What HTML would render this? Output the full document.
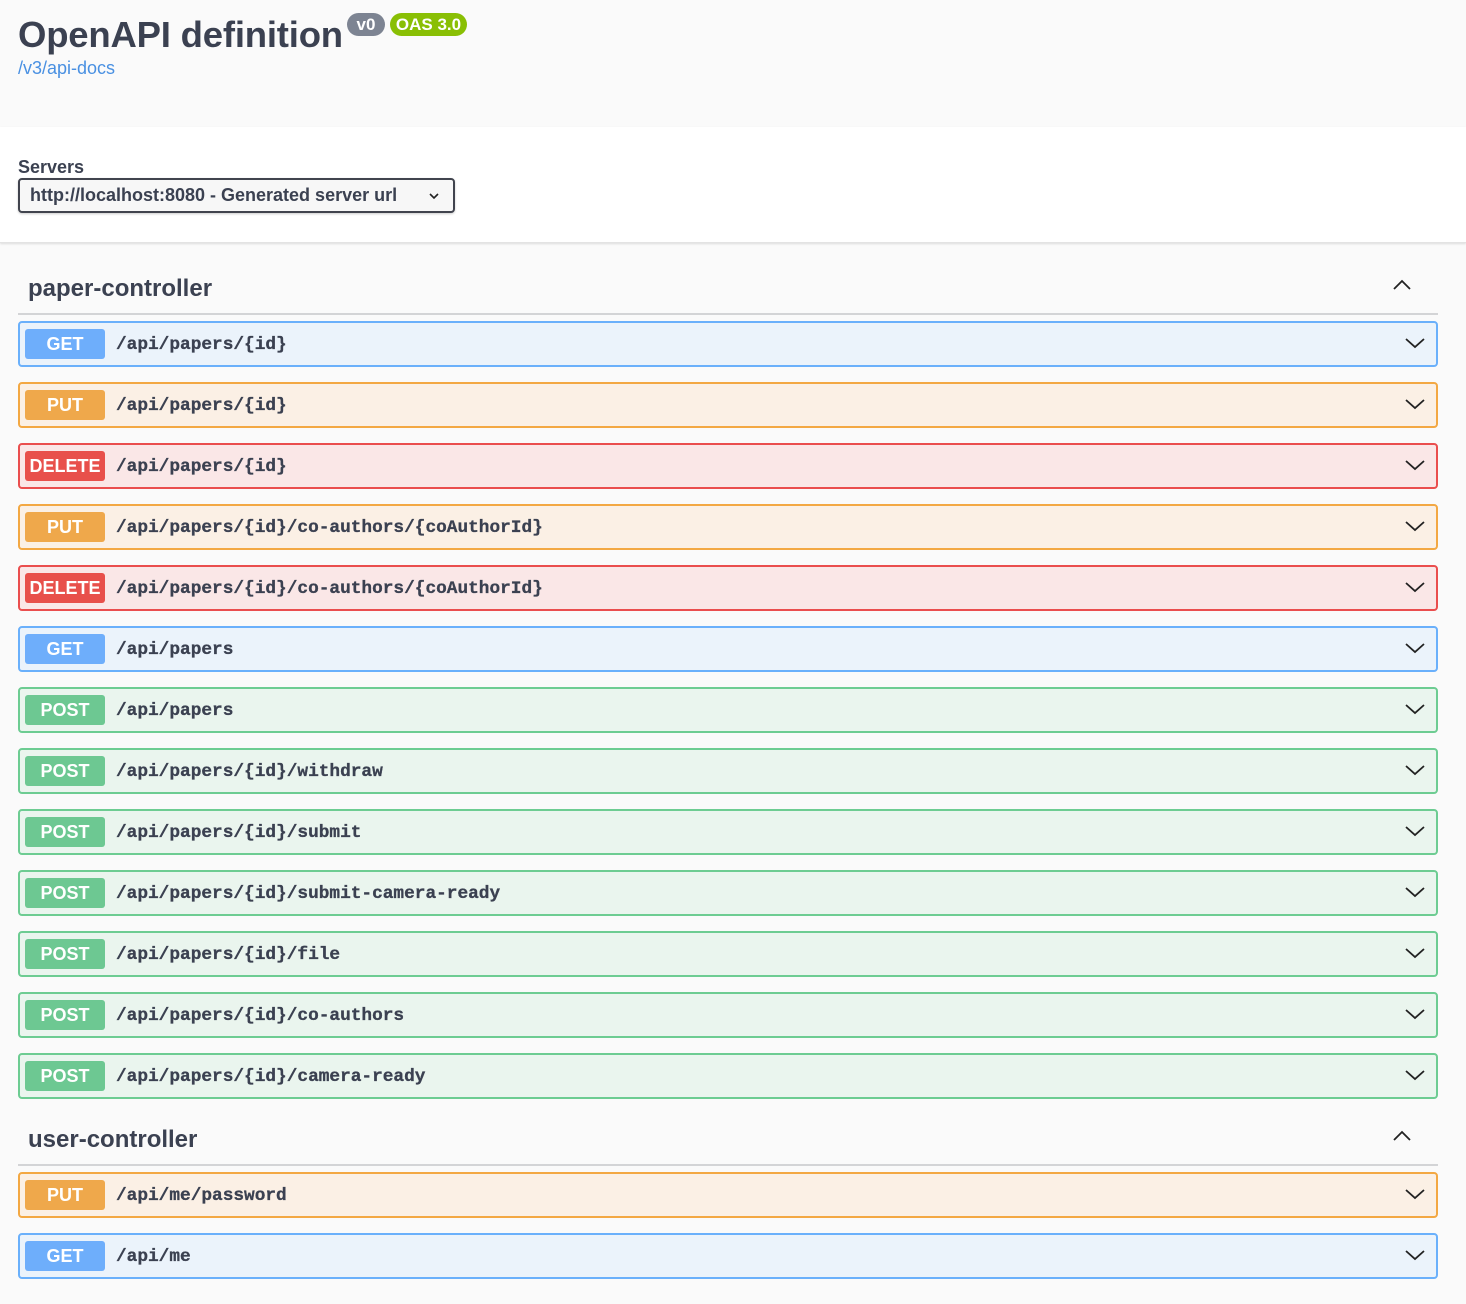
<!DOCTYPE html>
<html><head><meta charset="utf-8"><style>
*{box-sizing:border-box;margin:0;padding:0}
body{width:1466px;height:1304px;background:#fafafa;font-family:"Liberation Sans",Arial,sans-serif;color:#3b4151;position:relative;overflow:hidden}
.a{position:absolute}
h1{position:absolute;left:18px;top:14px;font-size:36.5px;font-weight:bold;color:#3b4151;letter-spacing:-0.2px}
.pill{position:absolute;height:23px;border-radius:12px;color:#fff;font-weight:bold;font-size:17px;line-height:23px;text-align:center}
.srv{position:absolute;left:0;top:127px;width:1466px;height:116px;background:#fff;border-bottom:1px solid #e3e3e3;box-shadow:0 1px 2px rgba(0,0,0,.12)}
.sel{position:absolute;left:18px;top:178px;width:437px;height:35px;border:2px solid #41444e;border-radius:4px;background:#f7f7f7;font-weight:bold;font-size:18px;line-height:31px;padding-left:10px;box-shadow:0 1px 2px rgba(0,0,0,.2)}
.tag{position:absolute;left:18px;width:1420px;height:48px;border-bottom:2px solid #d3d4d6}
.tag span{position:absolute;left:10px;top:8px;font-size:24px;font-weight:bold}
.op{position:absolute;left:18px;width:1420px;height:46px;border:2px solid;border-radius:4px}
.op b{position:absolute;left:5px;top:6px;width:80px;height:30px;border-radius:3px;color:#fff;font-size:18px;line-height:30px;text-align:center}
.op i{position:absolute;left:96px;top:12px;font-style:normal;font-family:"Liberation Mono",monospace;font-weight:bold;font-size:17.8px;color:#3b4151;-webkit-text-stroke:0.3px #3b4151}
.op svg{position:absolute;right:11px;top:14px}
.g{background:#ebf3fb;border-color:#6ab0fb}.g b{background:#6eaefb}
.p{background:#fbf0e5;border-color:#f3a843}.p b{background:#efa84b}
.d{background:#fae7e7;border-color:#ea4e4e}.d b{background:#e8504b}
.s{background:#eaf5ee;border-color:#6dcc92}.s b{background:#6dc892}
</style></head><body>
<h1>OpenAPI definition</h1>
<div class="pill" style="left:347px;top:13px;width:38px;background:#7d8492">v0</div>
<div class="pill" style="left:390px;top:13px;width:77px;background:#89bf04">OAS 3.0</div>
<div class="a" style="left:18px;top:58px;font-size:18px;color:#4990e2">/v3/api-docs</div>
<div class="srv"></div>
<div class="a" style="left:18px;top:157px;font-size:18px;font-weight:bold">Servers</div>
<div class="sel">http://localhost:8080 - Generated server url
<svg class="a" style="left:408px;top:12px" width="12" height="8" viewBox="0 0 12 8"><path d="M2 2l4 4 4-4" fill="none" stroke="#222" stroke-width="1.6"/></svg></div>

<div class="tag" style="top:267px"><span>paper-controller</span>
<svg class="a" style="left:1375px;top:12px" width="18" height="11" viewBox="0 0 18 11"><path d="M1 10l8-8 8 8" fill="none" stroke="#222" stroke-width="1.8"/></svg></div>

<div class="op g" style="top:321px"><b>GET</b><i>/api/papers/{id}</i><svg width="20" height="12" viewBox="0 0 20 12"><path d="M1 2l9 8 9-8" fill="none" stroke="#222" stroke-width="1.8"/></svg></div>
<div class="op p" style="top:382px"><b>PUT</b><i>/api/papers/{id}</i><svg width="20" height="12" viewBox="0 0 20 12"><path d="M1 2l9 8 9-8" fill="none" stroke="#222" stroke-width="1.8"/></svg></div>
<div class="op d" style="top:443px"><b>DELETE</b><i>/api/papers/{id}</i><svg width="20" height="12" viewBox="0 0 20 12"><path d="M1 2l9 8 9-8" fill="none" stroke="#222" stroke-width="1.8"/></svg></div>
<div class="op p" style="top:504px"><b>PUT</b><i>/api/papers/{id}/co-authors/{coAuthorId}</i><svg width="20" height="12" viewBox="0 0 20 12"><path d="M1 2l9 8 9-8" fill="none" stroke="#222" stroke-width="1.8"/></svg></div>
<div class="op d" style="top:565px"><b>DELETE</b><i>/api/papers/{id}/co-authors/{coAuthorId}</i><svg width="20" height="12" viewBox="0 0 20 12"><path d="M1 2l9 8 9-8" fill="none" stroke="#222" stroke-width="1.8"/></svg></div>
<div class="op g" style="top:626px"><b>GET</b><i>/api/papers</i><svg width="20" height="12" viewBox="0 0 20 12"><path d="M1 2l9 8 9-8" fill="none" stroke="#222" stroke-width="1.8"/></svg></div>
<div class="op s" style="top:687px"><b>POST</b><i>/api/papers</i><svg width="20" height="12" viewBox="0 0 20 12"><path d="M1 2l9 8 9-8" fill="none" stroke="#222" stroke-width="1.8"/></svg></div>
<div class="op s" style="top:748px"><b>POST</b><i>/api/papers/{id}/withdraw</i><svg width="20" height="12" viewBox="0 0 20 12"><path d="M1 2l9 8 9-8" fill="none" stroke="#222" stroke-width="1.8"/></svg></div>
<div class="op s" style="top:809px"><b>POST</b><i>/api/papers/{id}/submit</i><svg width="20" height="12" viewBox="0 0 20 12"><path d="M1 2l9 8 9-8" fill="none" stroke="#222" stroke-width="1.8"/></svg></div>
<div class="op s" style="top:870px"><b>POST</b><i>/api/papers/{id}/submit-camera-ready</i><svg width="20" height="12" viewBox="0 0 20 12"><path d="M1 2l9 8 9-8" fill="none" stroke="#222" stroke-width="1.8"/></svg></div>
<div class="op s" style="top:931px"><b>POST</b><i>/api/papers/{id}/file</i><svg width="20" height="12" viewBox="0 0 20 12"><path d="M1 2l9 8 9-8" fill="none" stroke="#222" stroke-width="1.8"/></svg></div>
<div class="op s" style="top:992px"><b>POST</b><i>/api/papers/{id}/co-authors</i><svg width="20" height="12" viewBox="0 0 20 12"><path d="M1 2l9 8 9-8" fill="none" stroke="#222" stroke-width="1.8"/></svg></div>
<div class="op s" style="top:1053px"><b>POST</b><i>/api/papers/{id}/camera-ready</i><svg width="20" height="12" viewBox="0 0 20 12"><path d="M1 2l9 8 9-8" fill="none" stroke="#222" stroke-width="1.8"/></svg></div>

<div class="tag" style="top:1118px"><span>user-controller</span>
<svg class="a" style="left:1375px;top:12px" width="18" height="11" viewBox="0 0 18 11"><path d="M1 10l8-8 8 8" fill="none" stroke="#222" stroke-width="1.8"/></svg></div>
<div class="op p" style="top:1172px"><b>PUT</b><i>/api/me/password</i><svg width="20" height="12" viewBox="0 0 20 12"><path d="M1 2l9 8 9-8" fill="none" stroke="#222" stroke-width="1.8"/></svg></div>
<div class="op g" style="top:1233px"><b>GET</b><i>/api/me</i><svg width="20" height="12" viewBox="0 0 20 12"><path d="M1 2l9 8 9-8" fill="none" stroke="#222" stroke-width="1.8"/></svg></div>
</body></html>
